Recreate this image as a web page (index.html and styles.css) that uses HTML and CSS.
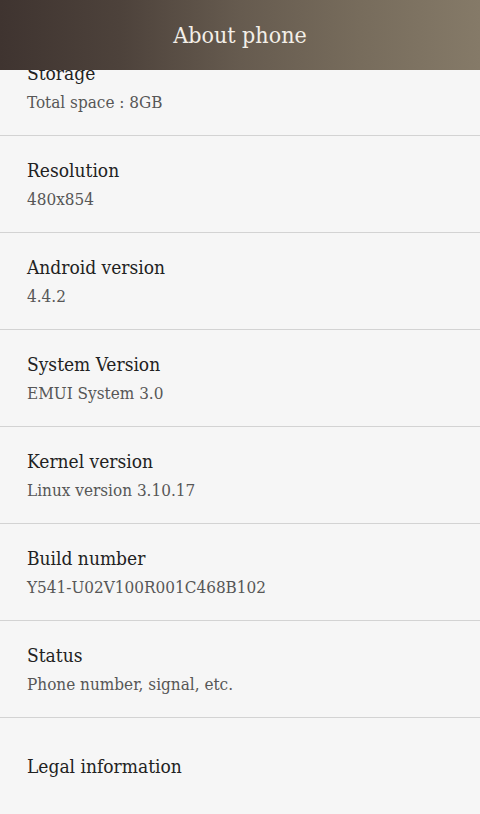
FILE: index.html
```html
<!DOCTYPE html>
<html lang="en">
<head>
    <meta charset="UTF-8">
    <meta name="viewport" content="width=device-width, initial-scale=1.0">
    <title>About phone</title>
    <link rel="stylesheet" href="styles.css">
</head>
<body>
<div class="action-bar">
    <h1>About phone</h1>
</div>
<ul class="settings-list">
    <li class="item">
        <span class="title">Storage</span>
        <span class="summary">Total space : 8GB</span>
    </li>
    <li class="item">
        <span class="title">Resolution</span>
        <span class="summary">480x854</span>
    </li>
    <li class="item">
        <span class="title">Android version</span>
        <span class="summary">4.4.2</span>
    </li>
    <li class="item">
        <span class="title">System Version</span>
        <span class="summary">EMUI System 3.0</span>
    </li>
    <li class="item">
        <span class="title">Kernel version</span>
        <span class="summary">Linux version 3.10.17</span>
    </li>
    <li class="item">
        <span class="title">Build number</span>
        <span class="summary">Y541-U02V100R001C468B102</span>
    </li>
    <li class="item">
        <span class="title">Status</span>
        <span class="summary">Phone number, signal, etc.</span>
    </li>
    <li class="item">
        <span class="title">Legal information</span>
    </li>
</ul>
</body>
</html>
```

FILE: styles.css
```css
html, body {
    margin: 0;
    padding: 0;
    height: 100%;
    overflow: hidden;
}

body {
    font-family: "DejaVu Serif Condensed", "DejaVu Serif", serif;
    background-color: #f6f6f6;
}

/* header sits on top of the scrolled list */
.action-bar {
    position: fixed;
    top: 0;
    left: 0;
    right: 0;
    height: 70px;
    z-index: 2;
    display: flex;
    align-items: center;
    justify-content: center;
    background: linear-gradient(to right, #3f3430 0%, #4d423b 25%, #665b4f 50%, #776c5c 75%, #857a68 100%);
}

.action-bar h1 {
    margin: 0;
    font-size: 23px;
    font-weight: normal;
    color: #f3efe8;
    padding-bottom: 1px;
}

.settings-list {
    list-style: none;
    margin: 0;
    padding: 39px 0 0 0;
}

.item {
    box-sizing: border-box;
    height: 97px;
    padding-left: 27px;
    padding-bottom: 2px;
    border-bottom: 1px solid #d3d3d3;
    display: flex;
    flex-direction: column;
    justify-content: center;
}

.item:last-child {
    border-bottom: none;
    padding-bottom: 0;
}

.title {
    font-size: 19px;
    line-height: 27px;
    color: #222222;
}

.summary {
    margin-top: 4px;
    font-size: 17px;
    line-height: 22px;
    color: #575757;
}
```
